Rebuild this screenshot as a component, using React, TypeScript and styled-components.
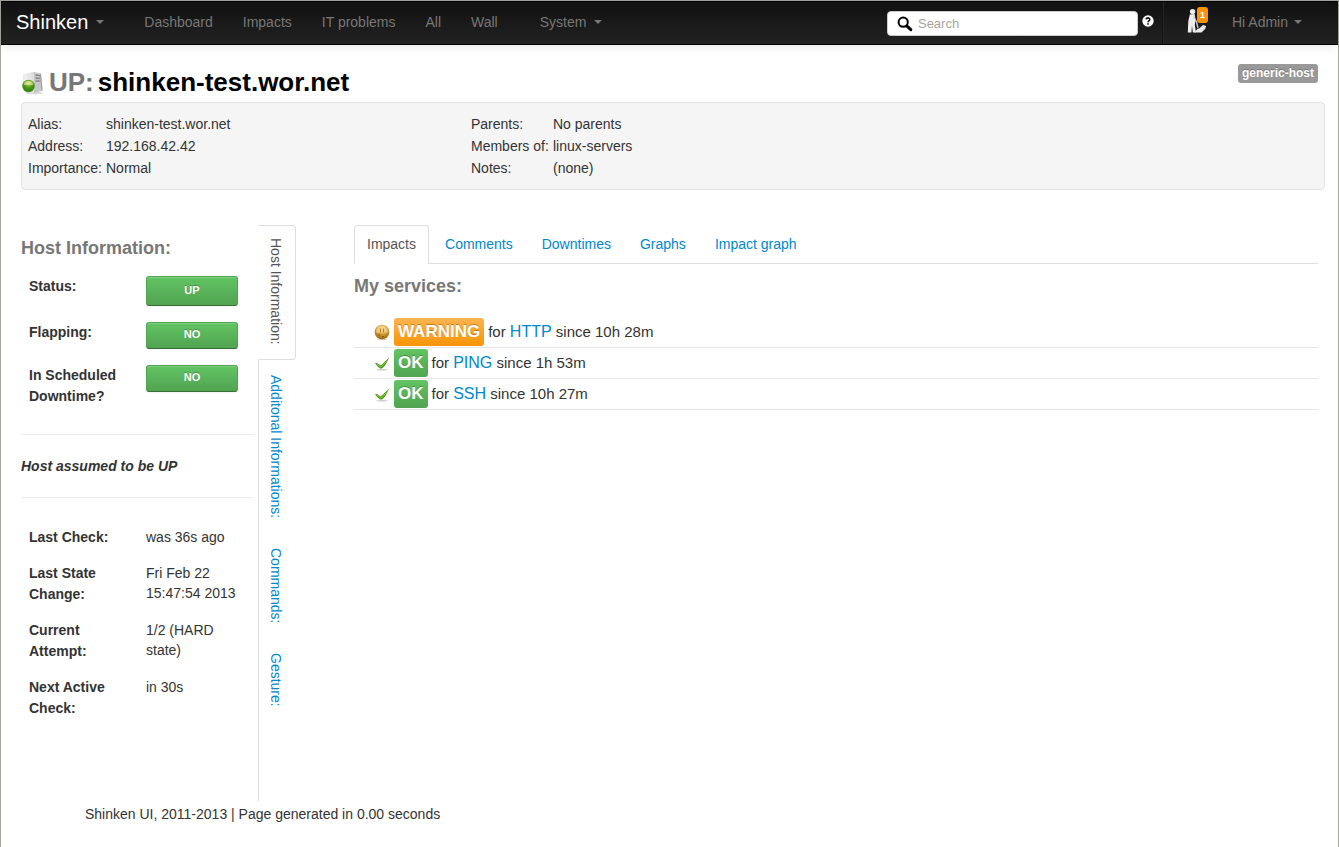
import React from 'react';
import styled, { createGlobalStyle, css } from 'styled-components';

const GlobalStyle = createGlobalStyle`
  *, *::before, *::after { box-sizing: border-box; }
  body {
    margin: 0;
    background: #fff;
    color: #333;
    font: 14px/20px "Liberation Sans", Arial, sans-serif;
  }
  a { color: #0088cc; text-decoration: none; }
  h1, h2, p, ul, dl, dd { margin: 0; padding: 0; }
  ul { list-style: none; }
`;

const Page = styled.div`
  min-height: 100vh;
  border: 1px solid #a9a6a1;
  border-bottom: 0;
`;

const Navbar = styled.nav`
  display: flex;
  height: 44px;
  border-top: 1px solid #000;
  border-bottom: 1px solid #000;
  background: linear-gradient(#111, #222);
  box-shadow: 0 1px 10px rgba(0, 0, 0, 0.1);
`;

const NavLink = styled.a<{ $brand?: boolean; $offset?: boolean }>`
  display: flex;
  align-items: center;
  gap: 8px;
  height: 40px;
  padding: 0 15px;
  color: #777;
  white-space: nowrap;
  ${(p) => p.$offset && css`margin-left: 12px;`}
  ${(p) => p.$brand && css`
    margin-right: 10px;
    color: #fff;
    font-size: 20px;
  `}
`;

const Caret = styled.span`
  border: 4px solid transparent;
  border-top-color: #777;
  border-bottom: 0;
`;

const Search = styled.form`
  display: flex;
  align-items: flex-start;
  gap: 4px;
  margin-left: auto;
  padding: 9px 8px 0 0;
`;

const SearchBox = styled.label`
  display: flex;
  align-items: center;
  gap: 5px;
  width: 251px;
  height: 25px;
  padding: 0 9px;
  border: 1px solid #ccc;
  border-radius: 4px;
  background: #fff;
`;

const SearchInput = styled.input`
  flex: 1;
  min-width: 0;
  padding: 0;
  border: 0;
  outline: 0;
  background: none;
  color: #555;
  font: 13px/20px "Liberation Sans", Arial, sans-serif;
  &::placeholder { color: #a5a59b; opacity: 1; }
`;

const HelpButton = styled.button`
  display: flex;
  padding: 4px 0 0;
  border: 0;
  background: none;
`;

const Problems = styled.a`
  position: relative;
  width: 55px;
  padding: 6px 0 0 24px;
  border-left: 1px solid #111;
  box-shadow: inset 1px 0 #252525;
`;

const Count = styled.span`
  position: absolute;
  top: 5px;
  left: 34px;
  width: 11px;
  border-radius: 3px;
  background: #f89406;
  color: #fff;
  font-size: 9px;
  font-weight: bold;
  line-height: 16px;
  text-align: center;
`;

const UserLink = styled(NavLink)`
  gap: 6px;
  margin-right: 21px;
`;

const Content = styled.main`
  padding: 19px 13px 0 20px;
`;

const TitleBar = styled.header`
  display: flex;
  align-items: flex-start;
  justify-content: space-between;
  height: 38px;
  padding-right: 7px;
`;

const Title = styled.h1`
  display: flex;
  align-items: center;
  gap: 4px;
  color: #777;
  font-size: 26px;
  line-height: 37px;
`;

const HostName = styled.span`
  color: #000;
`;

const Tag = styled.span`
  padding: 0 4px;
  border-radius: 3px;
  background: #999;
  color: #fff;
  font-size: 12px;
  font-weight: bold;
  line-height: 19px;
  text-shadow: 0 -1px 0 rgba(0, 0, 0, 0.25);
`;

const Well = styled.section`
  display: grid;
  grid-template-columns: 443px 1fr;
  padding: 10px 6px;
  border: 1px solid #e3e3e3;
  border-radius: 4px;
  background: #f5f5f5;
`;

const Facts = styled.dl<{ $label: number }>`
  display: grid;
  grid-template-columns: ${(p) => p.$label}px 1fr;
  line-height: 22px;
`;

const Columns = styled.div`
  display: flex;
  align-items: flex-start;
  padding: 35px 7px 0 0;
`;

const Sidebar = styled.section`
  flex: none;
  width: 233px;
  padding-top: 12px;
`;

const Heading = styled.h2`
  color: #777;
  font-size: 18px;
  line-height: 22px;
`;

const Details = styled.dl<{ $gap: number }>`
  display: grid;
  grid-template-columns: 117px 92px;
  row-gap: ${(p) => p.$gap}px;
  padding: 17px 8px 0;
  dt { font-weight: bold; line-height: 21px; padding-right: 16px; }
`;

const StateButton = styled.button<{ $tall?: boolean }>`
  display: block;
  width: 92px;
  height: ${(p) => (p.$tall ? 30 : 27)}px;
  padding: 0 0 3px;
  border: 1px solid #51a351;
  border-bottom-color: #387038;
  border-radius: 3px;
  background: linear-gradient(#62c462, #51a351);
  box-shadow: inset 0 1px 0 rgba(255, 255, 255, 0.2), 0 1px 2px rgba(0, 0, 0, 0.05);
  color: #fff;
  font: bold 11px/16px "Liberation Sans", Arial, sans-serif;
  text-shadow: 0 -1px 0 rgba(0, 0, 0, 0.25);
`;

const Output = styled.p`
  margin: 27px 0 12px;
  padding: 21px 0;
  border-top: 1px solid #eee;
  border-bottom: 1px solid #eee;
  font-style: italic;
  font-weight: bold;
`;

const SideTabs = styled.ul`
  display: flex;
  flex: none;
  flex-direction: column;
  gap: 2px;
  width: 38px;
  min-height: 576px;
  margin-left: 4px;
  box-shadow: inset 1px 0 #ddd;
`;

const SideTab = styled.a<{ $active?: boolean }>`
  display: block;
  width: 38px;
  padding: 12px 9px 14px 7px;
  border: 1px solid transparent;
  writing-mode: vertical-rl;
  white-space: nowrap;
  ${(p) => p.$active && css`
    border-color: #ddd #ddd #ddd #fff;
    border-radius: 0 4px 4px 0;
    background: #fff;
    color: #555;
  `}
`;

const Main = styled.section`
  flex: 1;
  min-width: 0;
  margin-left: 58px;
`;

const Tabs = styled.ul`
  display: flex;
  gap: 3px;
  margin-bottom: 11px;
  border-bottom: 1px solid #ddd;
`;

const Tab = styled.a<{ $active?: boolean }>`
  display: block;
  margin-bottom: -1px;
  padding: 8px 12px 9px;
  border: 1px solid transparent;
  ${(p) => p.$active && css`
    border-color: #ddd #ddd #fff;
    border-radius: 4px 4px 0 0;
    background: #fff;
    color: #555;
  `}
`;

const Services = styled.ul`
  margin-top: 20px;
`;

const Service = styled.li`
  display: flex;
  align-items: center;
  gap: 4px;
  padding: 1px 0 1px 20px;
  border-bottom: 1px solid #e5e5e5;
  font-size: 15px;
  a { font-size: 16px; }
`;

const State = styled.span<{ $warning?: boolean }>`
  padding: 0 4px;
  border-radius: 3px;
  background: ${(p) => (p.$warning ? 'linear-gradient(#fbb450, #f89406)' : 'linear-gradient(#62c462, #51a351)')};
  color: #fff;
  font-size: 17px;
  font-weight: bold;
  line-height: 28px;
  text-shadow: 0 -1px 0 rgba(0, 0, 0, 0.25);
`;

const Footer = styled.footer`
  padding: 3px 64px 0;
`;

const SearchIcon = () => (
  <svg width="16" height="16" viewBox="0 0 16 16" aria-hidden="true">
    <circle cx="6.2" cy="6.2" r="4.6" fill="none" stroke="#000" strokeWidth="2" />
    <path d="M9.8 9.8l4 3.8" stroke="#000" strokeWidth="3" strokeLinecap="round" />
  </svg>
);

const HelpIcon = () => (
  <svg width="12" height="12" viewBox="0 0 12 12" aria-hidden="true">
    <circle cx="6" cy="6" r="5.7" fill="#fff" />
    <path d="M4.2 4.6C4.2 2.3 7.8 2.3 7.8 4.5 7.8 5.8 6 5.8 6 7.2" fill="none" stroke="#111" strokeWidth="1.6" />
    <rect x="5.2" y="8.2" width="1.6" height="1.5" fill="#111" />
  </svg>
);

const DiggerIcon = () => (
  <svg width="20" height="26" viewBox="0 0 20 26" aria-hidden="true">
    <circle cx="5.6" cy="3.6" r="2.7" fill="#eee" />
    <path d="M2.8 6.5L7.6 6 8.6 12 7.8 17 9 24.5H5.8L5 17.5 4.4 24.5H.8L1.3 13z" fill="#eee" />
    <path d="M6.5 8.5L9.5 14 11 20" fill="none" stroke="#ccc" strokeWidth="1.4" />
    <path d="M7.5 24.5C9.5 22.5 9.5 20.5 12.5 20.3L16 17 19 18 18.5 20.5 14.5 24.5z" fill="#e9e9e9" />
  </svg>
);

const HostIcon = () => (
  <svg width="24" height="24" viewBox="0 0 24 24" aria-hidden="true">
    <defs>
      <linearGradient id="tower"><stop stopColor="#f4f4f4" /><stop offset="1" stopColor="#dcdcdc" /></linearGradient>
      <radialGradient id="orb" cx=".5" cy=".3"><stop stopColor="#c8df86" /><stop offset=".5" stopColor="#63a820" /><stop offset="1" stopColor="#3c8a10" /></radialGradient>
    </defs>
    <ellipse cx="13" cy="22" rx="9" ry="1.5" fill="#ddd" />
    <path d="M2.5 4L13 1v21L3 20z" fill="url(#tower)" stroke="#ddd" strokeWidth=".6" />
    <path d="M13 1l7 1.5 1.5 17L13 22.5z" fill="#c6c6c6" />
    <path d="M14.5 4l4.5.6M14.5 7l4.8.4M14.5 10l4.8.2" stroke="#858585" strokeWidth="1.3" />
    <path d="M19.5 3L21 19.5" stroke="#999" />
    <circle cx="7.5" cy="15" r="6.2" fill="url(#orb)" />
    <path d="M2.5 13C4.5 8.5 10.5 8.5 12.5 13 10.5 15.5 9 12.5 7.5 14.5 6 12.5 4.5 15 2.5 13z" fill="#e6e4a0" opacity=".75" />
  </svg>
);

const WarningIcon = () => (
  <svg width="16" height="16" viewBox="0 0 16 16" aria-hidden="true">
    <defs>
      <radialGradient id="amber" cx=".5" cy=".3" r=".7"><stop stopColor="#f3d590" /><stop offset=".6" stopColor="#cc9427" /><stop offset="1" stopColor="#96650c" /></radialGradient>
    </defs>
    <ellipse cx="8" cy="15.2" rx="5" ry=".8" fill="#ccc" />
    <circle cx="8" cy="8" r="7.3" fill="url(#amber)" />
    <path d="M2 7.5C2.5 3 5 1.8 8 1.8S13.500 3 14 7.500C13 9.500 12 9.500 11 8 10 10 9 10 8 8 7 10 6 10 5 8 4 9.500 3 9.500 2 7.500z" fill="#f7dda0" opacity=".6" />
    <path d="M6.500 4.500v4M9.500 4.500v4" stroke="#b57a18" />
    <path d="M4.500 11h2M8 12.500h2" stroke="#8a4f0a" />
  </svg>
);

const CheckIcon = () => (
  <svg width="16" height="16" viewBox="0 0 16 16" aria-hidden="true">
    <ellipse cx="8" cy="14.800" rx="6" ry=".8" fill="#ccc" />
    <path d="M1 8L3.500 8.200 6.800 10.600 15.200 2.500C13.500 6 11.500 11 8 13.600H6C4.500 12 2.500 10.500 1 8z" fill="#4c9c1a" />
    <path d="M3 9.200L6.800 12 12.500 6.500" fill="none" stroke="#86c94a" />
  </svg>
);

const services = [
  { state: 'WARNING', name: 'HTTP', age: '10h 28m' },
  { state: 'OK', name: 'PING', age: '1h 53m' },
  { state: 'OK', name: 'SSH', age: '10h 27m' },
];

const checks = [
  ['Last Check:', 'was 36s ago'],
  ['Last State Change:', 'Fri Feb 22 15:47:54 2013'],
  ['Current Attempt:', '1/2 (HARD state)'],
  ['Next Active Check:', 'in 30s'],
];

const FactList = ({ label, rows }: { label: number; rows: string[][] }) => (
  <Facts $label={label}>
    {rows.map(([name, value]) => (
      <React.Fragment key={name}>
        <dt>{name}</dt>
        <dd>{value}</dd>
      </React.Fragment>
    ))}
  </Facts>
);

export default function App() {
  return (
    <Page>
      <GlobalStyle />
      <Navbar>
        <NavLink href="#" $brand>Shinken<Caret /></NavLink>
        {['Dashboard', 'Impacts', 'IT problems', 'All', 'Wall'].map((item) => (
          <NavLink href="#" key={item}>{item}</NavLink>
        ))}
        <NavLink href="#" $offset>System<Caret /></NavLink>
        <Search>
          <SearchBox>
            <SearchIcon />
            <SearchInput type="text" placeholder="Search" aria-label="Search" />
          </SearchBox>
          <HelpButton type="button" aria-label="Help"><HelpIcon /></HelpButton>
        </Search>
        <Problems href="#" aria-label="Problems"><DiggerIcon /><Count>1</Count></Problems>
        <UserLink href="#">Hi Admin<Caret /></UserLink>
      </Navbar>

      <Content>
        <TitleBar>
          <Title><HostIcon />UP: <HostName>shinken-test.wor.net</HostName></Title>
          <Tag>generic-host</Tag>
        </TitleBar>
        <Well>
          <FactList label={78} rows={[['Alias:', 'shinken-test.wor.net'], ['Address:', '192.168.42.42'], ['Importance:', 'Normal']]} />
          <FactList label={82} rows={[['Parents:', 'No parents'], ['Members of:', 'linux-servers'], ['Notes:', '(none)']]} />
        </Well>

        <Columns>
          <Sidebar>
            <Heading>Host Information:</Heading>
            <Details $gap={16}>
              <dt>Status:</dt>
              <dd><StateButton $tall>UP</StateButton></dd>
              <dt>Flapping:</dt>
              <dd><StateButton>NO</StateButton></dd>
              <dt>In Scheduled Downtime?</dt>
              <dd><StateButton>NO</StateButton></dd>
            </Details>
            <Output>Host assumed to be UP</Output>
            <Details $gap={15}>
              {checks.map(([name, value]) => (
                <React.Fragment key={name}>
                  <dt>{name}</dt>
                  <dd>{value}</dd>
                </React.Fragment>
              ))}
            </Details>
          </Sidebar>

          <SideTabs>
            {['Host Information:', 'Additonal Informations:', 'Commands:', 'Gesture:'].map((item, i) => (
              <li key={item}><SideTab href="#" $active={i === 0}>{item}</SideTab></li>
            ))}
          </SideTabs>

          <Main>
            <Tabs>
              {['Impacts', 'Comments', 'Downtimes', 'Graphs', 'Impact graph'].map((item, i) => (
                <li key={item}><Tab href="#" $active={i === 0}>{item}</Tab></li>
              ))}
            </Tabs>
            <Heading>My services:</Heading>
            <Services>
              {services.map(({ state, name, age }) => (
                <Service key={name}>
                  {state === 'OK' ? <CheckIcon /> : <WarningIcon />}
                  <State $warning={state !== 'OK'}>{state}</State>
                  <span>for <a href="#">{name}</a> since {age}</span>
                </Service>
              ))}
            </Services>
          </Main>
        </Columns>
        <Footer>Shinken UI, 2011-2013 | Page generated in 0.00 seconds</Footer>
      </Content>
    </Page>
  );
}
